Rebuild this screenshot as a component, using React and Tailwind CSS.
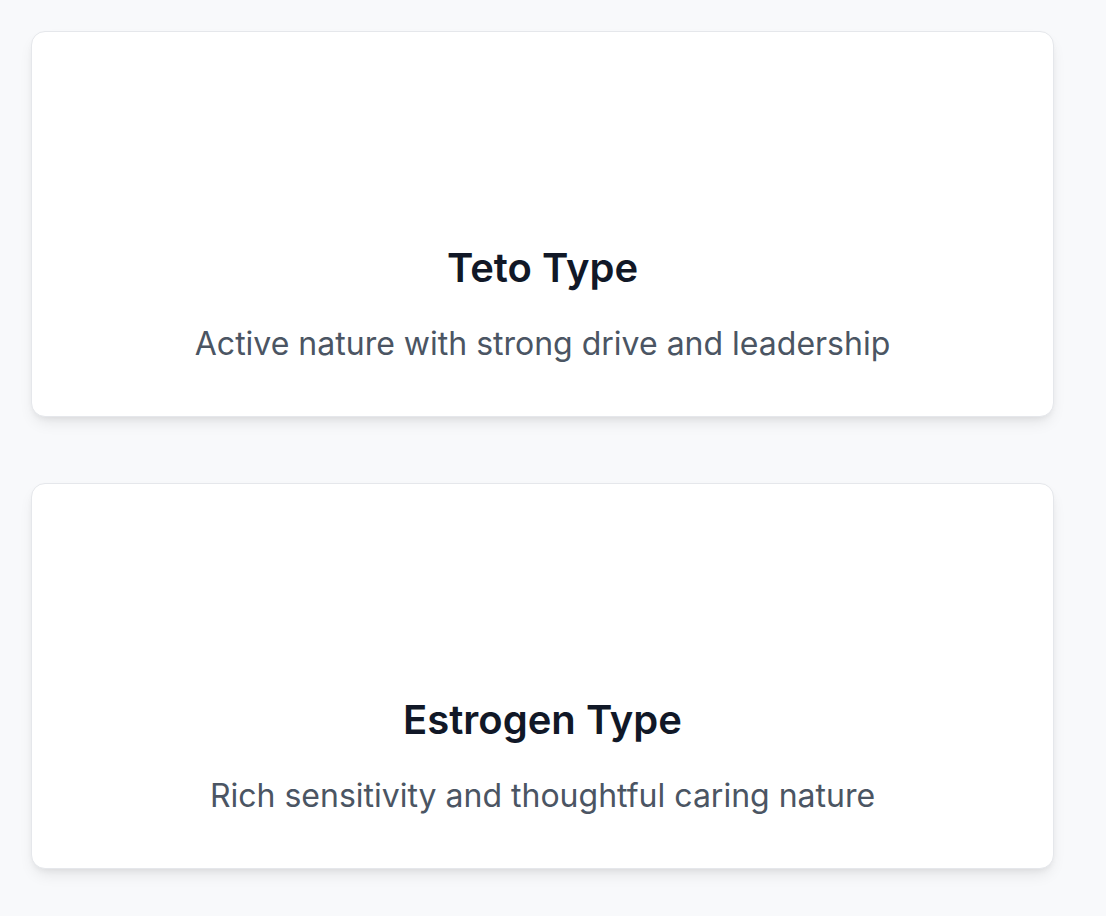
const types = [
  { title: "Teto Type", desc: "Active nature with strong drive and leadership" },
  { title: "Estrogen Type", desc: "Rich sensitivity and thoughtful caring nature" },
];

const TypeCard = ({ title, desc }) => (
  <div className="h-[386px] w-[1023px] rounded-[14px] border border-[#e5e7eb] bg-white shadow-[0_8px_16px_-4px_rgba(0,0,0,0.10),0_3px_6px_-2px_rgba(0,0,0,0.06)] flex flex-col items-center justify-end pb-[50px]">
    <h2 className="text-[40px] font-semibold text-[#111827] leading-[48px]">{title}</h2>
    <p className="mt-[30px] text-[32px] text-[#4b5563] leading-[44px]">{desc}</p>
  </div>
);

export default function App() {
  return (
    <div className="min-h-screen bg-[#f8f9fb] pt-[31px] pl-[31px] font-['Inter',sans-serif]">
      <div className="flex flex-col gap-[66px]">
        {types.map((t) => (
          <TypeCard key={t.title} {...t} />
        ))}
      </div>
    </div>
  );
}
